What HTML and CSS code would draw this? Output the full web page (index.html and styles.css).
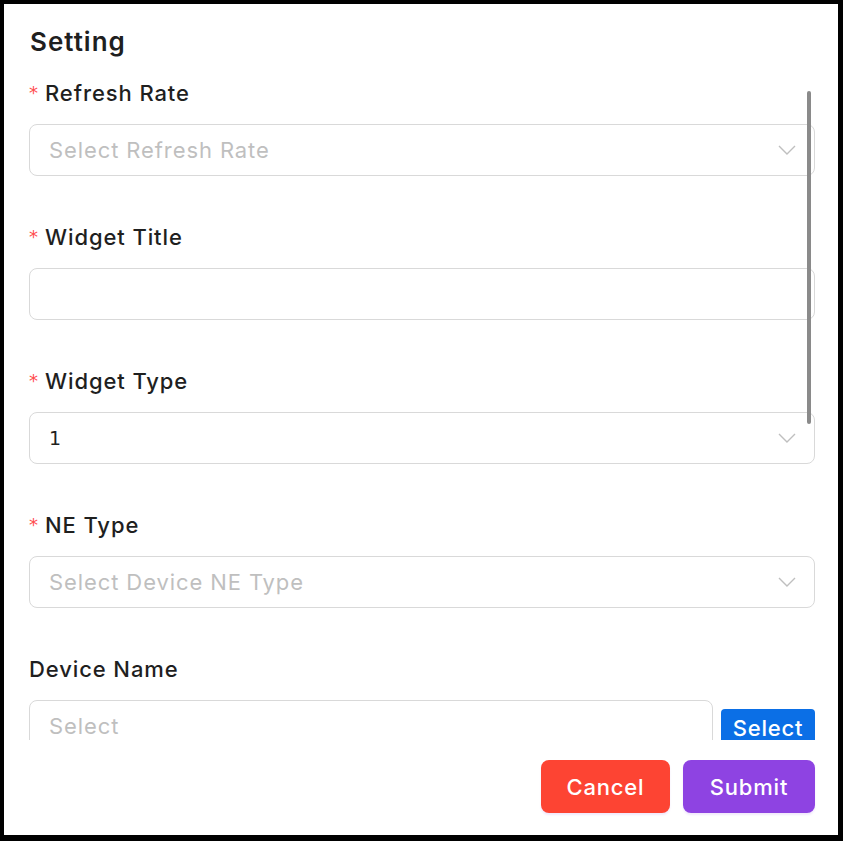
FILE: index.html
```html
<!DOCTYPE html>
<html lang="en">
<head>
<meta charset="utf-8">
<title>Setting</title>
<link rel="stylesheet" href="styles.css">
</head>
<body>
<div class="panel">
  <h2 class="title">Setting</h2>
  <div class="scroll">
    <div class="thumb"></div>
    <div class="item">
      <div class="label"><span class="req">*</span>Refresh Rate</div>
      <div class="control"><span class="ph">Select Refresh Rate</span><svg class="chev" viewBox="0 0 18 10"><path d="M1 1l8 8 8-8"/></svg></div>
    </div>
    <div class="item">
      <div class="label"><span class="req">*</span>Widget Title</div>
      <div class="control"></div>
    </div>
    <div class="item">
      <div class="label"><span class="req">*</span>Widget Type</div>
      <div class="control"><span class="val">1</span><svg class="chev" viewBox="0 0 18 10"><path d="M1 1l8 8 8-8"/></svg></div>
    </div>
    <div class="item">
      <div class="label"><span class="req">*</span>NE Type</div>
      <div class="control"><span class="ph">Select Device NE Type</span><svg class="chev" viewBox="0 0 18 10"><path d="M1 1l8 8 8-8"/></svg></div>
    </div>
    <div class="item">
      <div class="label">Device Name</div>
      <div class="row">
        <div class="control grow"><span class="ph">Select</span></div>
        <button class="btn-select">Select</button>
      </div>
    </div>
  </div>
  <div class="footer">
    <button class="btn cancel">Cancel</button>
    <button class="btn submit">Submit</button>
  </div>
</div>
</body>
</html>
```
FILE: styles.css
```css
html, body {
  margin: 0;
  padding: 0;
  background: #000;
}
body {
  width: 843px;
  height: 841px;
  font-family: Inter, "Noto Sans", sans-serif;
  color: #1f1f1f;
}
.panel {
  box-sizing: border-box;
  width: 843px;
  height: 841px;
  background: #fff;
  border-style: solid;
  border-color: #000;
  border-width: 4px 5px 6px 4px;
  display: flex;
  flex-direction: column;
}
.title {
  margin: 0;
  padding: 22px 0 0 26px;
  font-size: 26px;
  line-height: 32px;
  font-weight: 600;
  letter-spacing: 1px;
  color: #1f1f1f;
}
.scroll {
  position: relative;
  height: 682px;
  overflow: hidden;
  padding: 20px 23px 0 25px;
  box-sizing: border-box;
}
.thumb {
  position: absolute;
  top: 33px;
  right: 27px;
  width: 4px;
  height: 333px;
  border-radius: 2px;
  background: #8a8a8a;
}
.item {
  margin-bottom: 46px;
}
.label {
  height: 30px;
  line-height: 30px;
  font-size: 22px;
  font-weight: 500;
  letter-spacing: 0.9px;
  margin-bottom: 16px;
  display: flex;
  align-items: center;
}
.req {
  color: #ff4d4f;
  font-size: 18px;
  font-weight: 400;
  margin-right: 7px;
  letter-spacing: 0;
  font-family: "DejaVu Sans", sans-serif;
}
.control {
  box-sizing: border-box;
  height: 52px;
  border: 1px solid #d9d9d9;
  border-radius: 8px;
  padding: 0 18px 0 19px;
  display: flex;
  align-items: center;
  justify-content: space-between;
  font-size: 22px;
  letter-spacing: 0.9px;
}
.ph {
  color: #bfbfbf;
}
.val {
  color: #1f1f1f;
  font-family: "DejaVu Sans", sans-serif;
  font-size: 19px;
  letter-spacing: 0;
}
.chev {
  width: 18px;
  height: 10px;
  margin-left: auto;
}
.chev path {
  fill: none;
  stroke: #bfbfbf;
  stroke-width: 1.4;
}
.row {
  display: flex;
  gap: 8px;
  align-items: flex-start;
}
.grow {
  flex: 1;
}
.btn-select {
  margin-top: 9px;
  width: 94px;
  height: 38px;
  border: none;
  border-radius: 4px;
  background: #0b6fe6;
  color: #fff;
  font-family: inherit;
  font-size: 22px;
  font-weight: 500;
  letter-spacing: 0.8px;
  padding: 0;
}
.footer {
  display: flex;
  justify-content: flex-end;
  gap: 13px;
  padding: 20px 23px 0 0;
}
.btn {
  height: 53px;
  border: none;
  border-radius: 8px;
  color: #fff;
  font-family: inherit;
  font-size: 22px;
  font-weight: 500;
  letter-spacing: 0.8px;
  padding: 0;
  box-shadow: 0 2px 2px rgba(140, 70, 230, 0.12);
}
.cancel {
  width: 129px;
  background: #fd4433;
}
.submit {
  width: 132px;
  background: #8e43e2;
}
```
